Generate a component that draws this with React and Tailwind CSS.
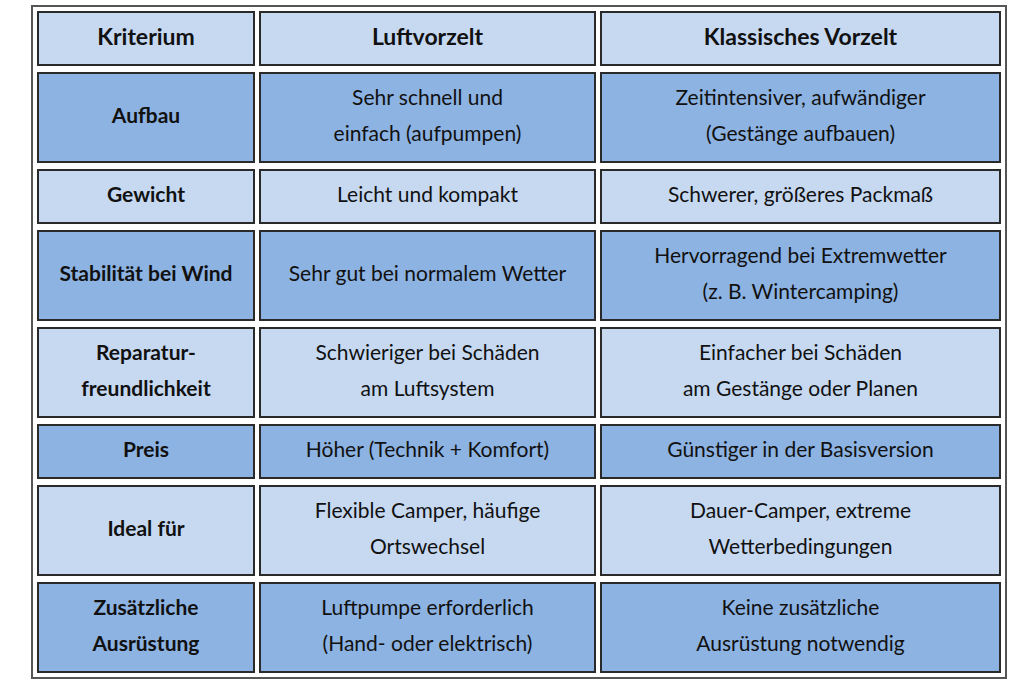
import React from 'react';

const rows = [
  { tone: 'light', head: true, cells: ['Kriterium', 'Luftvorzelt', 'Klassisches Vorzelt'] },
  { tone: 'dark', cells: ['Aufbau', ['Sehr schnell und', 'einfach (aufpumpen)'], ['Zeitintensiver, aufwändiger', '(Gestänge aufbauen)']] },
  { tone: 'light', cells: ['Gewicht', 'Leicht und kompakt', 'Schwerer, größeres Packmaß'] },
  { tone: 'dark', cells: ['Stabilität bei Wind', 'Sehr gut bei normalem Wetter', ['Hervorragend bei Extremwetter', '(z. B. Wintercamping)']] },
  { tone: 'light', cells: [['Reparatur-', 'freundlichkeit'], ['Schwieriger bei Schäden', 'am Luftsystem'], ['Einfacher bei Schäden', 'am Gestänge oder Planen']] },
  { tone: 'dark', cells: ['Preis', 'Höher (Technik + Komfort)', 'Günstiger in der Basisversion'] },
  { tone: 'light', cells: ['Ideal für', ['Flexible Camper, häufige', 'Ortswechsel'], ['Dauer-Camper, extreme', 'Wetterbedingungen']] },
  { tone: 'dark', cells: [['Zusätzliche', 'Ausrüstung'], ['Luftpumpe erforderlich', '(Hand- oder elektrisch)'], ['Keine zusätzliche', 'Ausrüstung notwendig']] },
];

function Cell({ text, tone, bold, head }) {
  const lines = Array.isArray(text) ? text : [text];
  return (
    <div
      className={`flex flex-col items-center justify-center border-2 border-[#2a2a2a] px-2 pt-[5px] pb-[10px] text-center leading-[36px] text-[#111] ${
        tone === 'dark' ? 'bg-[#8db3e2]' : 'bg-[#c6d9f1]'
      } ${bold ? 'font-bold' : ''} ${head ? 'text-[23px]' : 'text-[21px]'}`}
    >
      {lines.map((l, i) => (
        <span key={i} className="whitespace-nowrap">{l}</span>
      ))}
    </div>
  );
}

export default function App() {
  return (
    <div className="min-h-[681px] w-[1020px] bg-white pt-[5px] pl-[31px] font-['Lato',sans-serif]">
      <div className="w-[976px] border-2 border-[#555] p-1">
        <div className="grid grid-cols-[218px_337px_401px] gap-x-[4px] gap-y-[6px]">
          {rows.map((row, r) =>
            row.cells.map((c, i) => (
              <Cell key={`${r}-${i}`} text={c} tone={row.tone} bold={row.head || i === 0} head={row.head} />
            ))
          )}
        </div>
      </div>
    </div>
  );
}
